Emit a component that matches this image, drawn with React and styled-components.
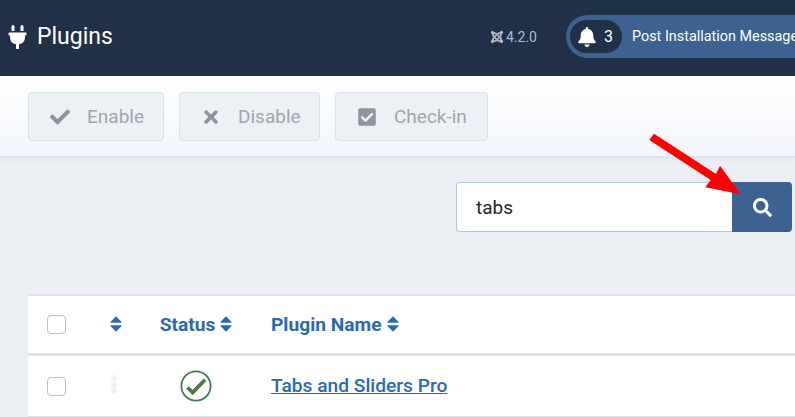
import React from "react";
import styled, { createGlobalStyle } from "styled-components";
import {
  FaPlug,
  FaCheck,
  FaTimes,
  FaCheckSquare,
  FaBell,
  FaSearch,
  FaJoomla,
} from "react-icons/fa";

const GlobalStyle = createGlobalStyle`
  html, body {
    margin: 0;
    padding: 0;
    background: #ecf0f5;
    font-family: Roboto, "Liberation Sans", sans-serif;
    overflow: hidden;
  }
`;

const Page = styled.div`
  position: relative;
  width: 795px;
  height: 417px;
  overflow: hidden;
`;

const Header = styled.header`
  height: 76px;
  background: #1f3047;
  display: flex;
  align-items: center;
  color: #fff;
  padding: 0 0 3px 8px;
  box-sizing: border-box;
`;

const Title = styled.h1`
  display: flex;
  align-items: center;
  gap: 10px;
  margin: 0;
  font-size: 23px;
  font-weight: 400;
  svg {
    width: 19px;
    height: 24px;
  }
`;

const Version = styled.div`
  margin-left: auto;
  display: flex;
  align-items: center;
  gap: 2px;
  font-size: 14px;
  color: #b3b9c2;
  svg {
    width: 14px;
    height: 14px;
  }
`;

const Pill = styled.div`
  margin-left: 29px;
  margin-right: -41px;
  flex: none;
  width: 270px;
  height: 43px;
  box-sizing: border-box;
  padding: 5px 4px;
  border-radius: 22px 0 0 22px;
  background: #3d6190;
  display: flex;
  align-items: center;
  font-size: 14.4px;
  white-space: nowrap;
`;

const BellBadge = styled.span`
  display: flex;
  align-items: center;
  gap: 8px;
  width: 52px;
  height: 33px;
  box-sizing: border-box;
  padding-left: 8px;
  border-radius: 17px;
  background: #1f3047;
  font-size: 16px;
  margin-right: 10px;
  flex: none;
  svg {
    width: 18px;
    height: 20px;
  }
`;

const Toolbar = styled.div`
  height: 81px;
  box-sizing: border-box;
  display: flex;
  gap: 15px;
  padding: 16px 28px 0;
  background: linear-gradient(180deg, #ffffff 0%, #f3f6fb 100%);
  border-bottom: 1px solid #dfe6f0;
  box-shadow: 0 2px 4px rgba(180, 195, 220, 0.25);
`;

const ToolButton = styled.button`
  height: 49px;
  width: ${(p) => p.$width}px;
  box-sizing: border-box;
  display: flex;
  align-items: center;
  gap: 17px;
  padding: 0 0 0 ${(p) => p.$pad}px;
  background: #edf0f4;
  border: 1px solid #dde2e9;
  border-radius: 4px;
  color: #a2a6ad;
  font-family: inherit;
  font-size: 19px;
  svg {
    width: 20px;
    height: 20px;
    color: #8f949d;
    flex: none;
  }
`;

const SearchRow = styled.div`
  display: flex;
  justify-content: flex-end;
  padding: 25px 3px 0 0;
`;

const SearchInput = styled.input`
  width: 276px;
  height: 50px;
  box-sizing: border-box;
  padding: 0 19px;
  border: 1px solid #b2c5e0;
  border-right: none;
  border-radius: 4px 0 0 4px;
  background: #fff;
  color: #22262a;
  font-family: inherit;
  font-size: 19px;
  outline: none;
`;

const SearchButton = styled.button`
  width: 60px;
  height: 50px;
  border: none;
  border-radius: 0 4px 4px 0;
  background: #3d6190;
  color: #fff;
  display: flex;
  align-items: center;
  justify-content: center;
  svg {
    width: 19px;
    height: 19px;
  }
`;

const Table = styled.div`
  margin: 62px 0 0 28px;
  background: #fff;
  border-top: 2px solid #dfe3e8;
`;

const Row = styled.div`
  display: grid;
  grid-template-columns: 56px 63px 98px 1fr;
  align-items: center;
  height: ${(p) => p.$height}px;
  border-bottom: ${(p) => p.$border};
`;

const Cell = styled.div`
  display: flex;
  align-items: center;
  justify-content: ${(p) => p.$justify || "flex-start"};
`;

const NameCell = styled(Cell)`
  padding-left: 26px;
`;

const Checkbox = styled.span`
  width: 17px;
  height: 17px;
  margin-left: 19px;
  border: 1px solid #bcbfc4;
  border-radius: 4px;
  background: #fff;
`;

const SortHead = styled.span`
  display: flex;
  align-items: center;
  gap: 5px;
  color: #2a69b8;
  font-size: 19.2px;
  font-weight: 700;
  white-space: nowrap;
  svg {
    margin-bottom: 2px;
  }
`;

const DragDots = styled.span`
  display: flex;
  flex-direction: column;
  gap: 0.5px;
  margin: 0 0 3px 27px;
  i {
    width: 6px;
    height: 6px;
    border-radius: 50%;
    background: #f0f1f1;
  }
`;

const PluginLink = styled.a`
  color: #2a69b8;
  font-size: 19.2px;
  font-weight: 500;
  text-decoration: underline;
  margin-bottom: 2px;
`;

const ArrowOverlay = styled.svg`
  position: absolute;
  left: 645px;
  top: 130px;
  pointer-events: none;
`;

function SortIcon() {
  return (
    <svg width="12" height="16" viewBox="0 0 12 16" fill="currentColor">
      <path d="M6 .3l5.6 5.7q.4.8-.6.8H1q-1 0-.6-.8z" />
      <path d="M6 15.7l5.6-5.7q.4-.8-.6-.8H1q-1 0-.6.8z" />
    </svg>
  );
}

function StatusIcon() {
  return (
    <svg width="32" height="32" viewBox="0 0 32 32">
      <circle cx="16" cy="16" r="14.6" fill="#fff" stroke="#457a54" strokeWidth="1.8" />
      <path d="M7.5 17.5l5.2 5L25 9.8" fill="none" stroke="#4c7a4a" strokeWidth="3.8" />
    </svg>
  );
}

function App() {
  return (
    <Page>
      <GlobalStyle />
      <Header>
        <Title>
          <FaPlug />
          Plugins
        </Title>
        <Version>
          <FaJoomla />
          4.2.0
        </Version>
        <Pill>
          <BellBadge>
            <FaBell />3
          </BellBadge>
          Post Installation Messages
        </Pill>
      </Header>
      <Toolbar>
        <ToolButton $width={136} $pad={21}>
          <FaCheck />
          Enable
        </ToolButton>
        <ToolButton $width={141} $pad={21}>
          <FaTimes />
          Disable
        </ToolButton>
        <ToolButton $width={153} $pad={21}>
          <FaCheckSquare />
          Check-in
        </ToolButton>
      </Toolbar>
      <SearchRow>
        <SearchInput defaultValue="tabs" />
        <SearchButton>
          <FaSearch />
        </SearchButton>
      </SearchRow>
      <Table>
        <Row $height={57} $border="3px solid #dfe3e8">
          <Cell>
            <Checkbox />
          </Cell>
          <Cell $justify="center">
            <SortHead>
              <SortIcon />
            </SortHead>
          </Cell>
          <Cell $justify="center">
            <SortHead>
              Status
              <SortIcon />
            </SortHead>
          </Cell>
          <NameCell>
            <SortHead>
              Plugin Name
              <SortIcon />
            </SortHead>
          </NameCell>
        </Row>
        <Row $height={60} $border="1px solid #dfe3e8">
          <Cell>
            <Checkbox />
          </Cell>
          <Cell>
            <DragDots>
              <i />
              <i />
              <i />
            </DragDots>
          </Cell>
          <Cell $justify="center">
            <StatusIcon />
          </Cell>
          <NameCell>
            <PluginLink href="#">Tabs and Sliders Pro</PluginLink>
          </NameCell>
        </Row>
      </Table>
      <ArrowOverlay width="110" height="90" viewBox="0 0 110 90">
        <path d="M4.3 10L9 3.7 71 44l4-8.3L95.7 64.3 60.3 57.3 65.7 50z" fill="#ff0000" />
      </ArrowOverlay>
    </Page>
  );
}

export default App;
